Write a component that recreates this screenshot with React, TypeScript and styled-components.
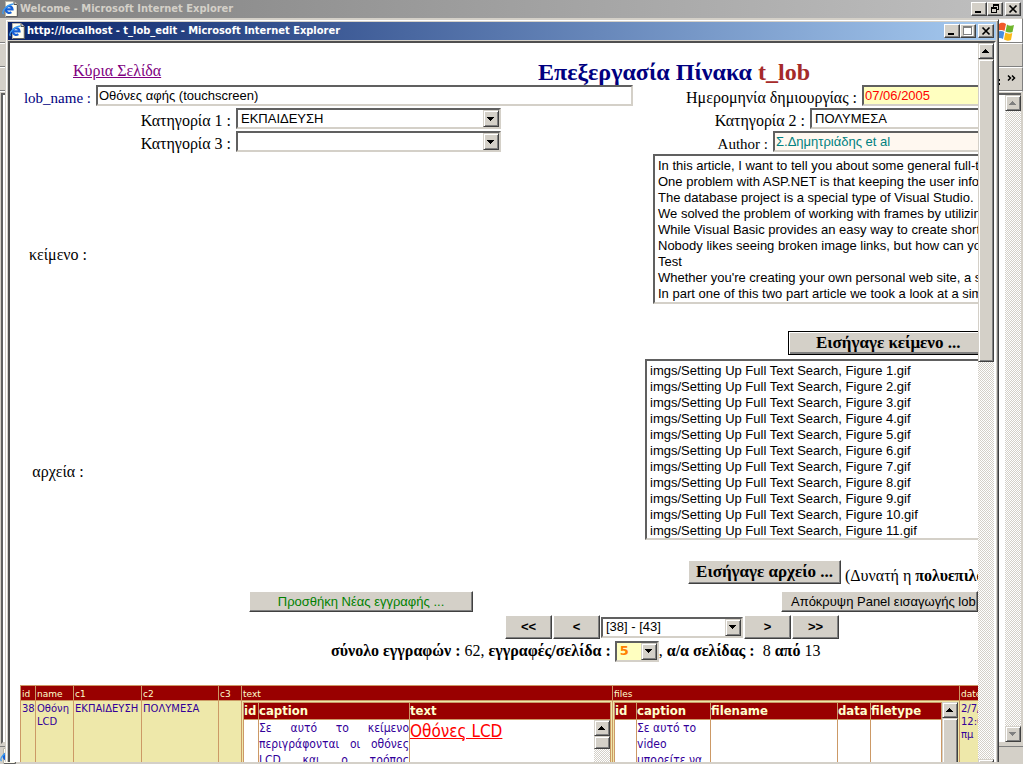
import React from "react";
import styled, { createGlobalStyle, css } from "styled-components";

const face = "#d4d0c8";
const sans = '"Liberation Sans", Arial, sans-serif';
const serif = '"Liberation Serif", "Times New Roman", serif';
const tahoma = '"DejaVu Sans Condensed", "DejaVu Sans", Tahoma, sans-serif';
const verdana = '"DejaVu Sans", Verdana, sans-serif';

const raised = css`
  border: 1px solid;
  border-color: ${face} #404040 #404040 ${face};
  box-shadow: inset 1px 1px 0 #ffffff, inset -1px -1px 0 #808080;
`;

const sunken = css`
  border: 2px solid;
  border-color: #606060 ${face} ${face} #606060;
`;

const Global = createGlobalStyle`
  *, *::before, *::after { box-sizing: border-box; }
  html, body, #root { height: 100%; }
  body { margin: 0; overflow: hidden; background: ${face}; }
`;

const Desktop = styled.div`
  position: relative;
  height: 100vh;
  overflow: hidden;
  background: ${face};
  display: flex;
  flex-direction: column;
`;

const TitleBar = styled.header<{ $active?: boolean }>`
  display: flex;
  align-items: center;
  flex: none;
  height: 18px;
  padding: 0 2px 0 ${(p) => (p.$active ? 1 : 2)}px;
  background: ${(p) =>
    p.$active
      ? "linear-gradient(90deg, #0a246a, #a6caf0)"
      : "linear-gradient(90deg, #808080, #c0c0c0)"};
  color: ${(p) => (p.$active ? "#ffffff" : face)};
  font: bold 11px/18px ${tahoma};
`;

const TitleText = styled.span`
  flex: 1;
  padding-left: 2px;
  white-space: nowrap;
`;

const Caption = styled.button<{ $gap?: boolean }>`
  width: 16px;
  height: 14px;
  padding: 0;
  margin-left: ${(p) => (p.$gap ? 2 : 0)}px;
  border: 1px solid;
  border-color: #ffffff #404040 #404040 #ffffff;
  box-shadow: inset -1px -1px 0 #808080;
  background: ${face};
  display: flex;
  align-items: center;
  justify-content: center;
`;

const ToolBand = styled.div<{ $white?: boolean }>`
  flex: none;
  height: ${(p) => (p.$white ? 26 : 24)}px;
  display: flex;
  align-items: center;
  justify-content: flex-end;
  padding-right: 4px;
  background: ${(p) =>
    p.$white ? `linear-gradient(90deg, ${face} 95%, #ffffff 95%)` : face};
  border-top: ${(p) => (p.$white ? 1 : 0)}px solid ${face};
  border-bottom: 1px solid #ffffff;
  border-right: 1px solid #808080;
  box-shadow: inset 0 -1px 0 #808080;
`;

const BackPage = styled.div`
  flex: 1;
  min-height: 0;
  margin: 1px 2px 0 1px;
  background: #ffffff;
  border: 2px solid;
  border-color: #606060 #ffffff ${face} #606060;
  border-right-width: 0;
  display: flex;
  justify-content: flex-end;
`;

const StatusBar = styled.footer`
  flex: none;
  height: 18px;
  margin-top: 2px;
  padding-top: 1px;
  border-top: 1px solid #808080;
  background: ${face};
`;

const Popup = styled.section`
  position: absolute;
  left: 5px;
  right: 24px;
  top: 19px;
  bottom: 2px;
  display: flex;
  flex-direction: column;
  overflow: hidden;
  padding: 2px 2px 0 2px;
  background: ${face};
  border: 1px solid;
  border-color: ${face} #404040 ${face} ${face};
  border-bottom: 0;
  box-shadow: inset 1px 1px 0 #ffffff, inset -1px 0 0 #808080;
`;

const PageFrame = styled.div`
  flex: 1;
  min-height: 0;
  display: flex;
  margin-top: 1px;
  border: 2px solid;
  border-color: #505050 #ffffff #505050 #505050;
  border-bottom: 0;
  background: #ffffff;
`;

const Page = styled.main`
  flex: 1;
  min-width: 0;
  overflow: hidden;
  padding-top: 17px;
  font: 16px/20px ${serif};
  color: #000000;
`;

const BarTrack = styled.div<{ $below?: boolean }>`
  flex: none;
  width: 16px;
  margin-bottom: ${(p) => (p.$below ? -13 : 0)}px;
  display: flex;
  flex-direction: column;
  background: repeating-conic-gradient(${face} 0 25%, #ffffff 0 50%) 0 0 / 2px 2px;
`;

const BarButton = styled.button`
  ${raised}
  flex: none;
  width: 16px;
  height: 16px;
  padding: 0;
  background: ${face};
  display: flex;
  align-items: center;
  justify-content: center;
`;

const Thumb = styled.div<{ $grow: number }>`
  ${raised}
  flex: ${(p) => p.$grow} 1 0;
  background: ${face};
`;

const Space = styled.div<{ $grow: number }>`
  flex: ${(p) => p.$grow} 1 0;
`;

const Arrow = ({ down, off }: { down?: boolean; off?: boolean }) => (
  <svg width="8" height="4" viewBox="0 0 8 4" shapeRendering="crispEdges">
    <path
      d={down ? "M0 0h7v1h-1v1h-1v1h-1v1h-1v-1h-1v-1h-1v-1h-1z" : "M3 0h1v1h1v1h1v1h1v1h-7v-1h1v-1h1v-1h1z"}
      fill={off ? "#808080" : "#000000"}
    />
  </svg>
);

type BarProps = { thumb: number; rest: number; off?: boolean; below?: boolean };
const ScrollBar = ({ thumb, rest, off, below }: BarProps) => (
  <BarTrack $below={below}>
    <BarButton aria-label="Scroll up">
      <Arrow off={off} />
    </BarButton>
    {thumb > 0 && <Thumb $grow={thumb} />}
    <Space $grow={rest} />
    <BarButton aria-label="Scroll down">
      <Arrow down off={off} />
    </BarButton>
  </BarTrack>
);

const IeIcon = () => (
  <svg width="16" height="16" viewBox="0 0 16 16">
    <path d="M3.500.500h8.500l3 3v12h-11.500z" fill="#fffdf0" stroke="#b8b4a8" />
    <path d="M12 .500v3h3" fill="#d4d0c8" stroke="#505050" />
    <path d="M15.500 4v11.500H4" fill="none" stroke="#606060" />
    <path d="M4 8.300h6.500a3.400 3.400 0 1 0-1.200 2.800" fill="none" stroke="#1560d8" strokeWidth="2.200" />
    <path d="M1.500 13C-1 10.500 5 3.500 11.500 3" fill="none" stroke="#3f9cf0" strokeWidth="1.300" />
  </svg>
);

const Flag = () => (
  <svg width="22" height="22" viewBox="0 0 22 22">
    <path d="M3 4c2-2 5-1.500 7 0L8.500 11C6.500 9.500 4 9.500 1.500 11z" fill="#f1592a" />
    <path d="M11 4.500c2 1.500 4.500 1.500 7 .5l-1.500 7c-2.500 1-5 .5-7-.5z" fill="#6fb52c" />
    <path d="M1.300 12c2.500-1.500 5-1.300 7 0L7 19C5 17.500 2.500 17.500 0 19z" fill="#4a8fe0" />
    <path d="M9.300 12.500c2 1.300 4.500 1.500 7 .5L15 20c-2.500 1-5 .8-7-.5z" fill="#fbb917" />
  </svg>
);

const Chevrons = () => (
  <svg width="20" height="16" viewBox="0 0 20 16">
    <path d="M0 7h2v2H0zM0 11h2v2H0z" fill="#000000" />
    <path d="M10 3.500l2.500 2.500L10 8.500M14 3.500l2.500 2.500L14 8.500" fill="none" stroke="#000000" strokeWidth="1.500" />
  </svg>
);

const MinGlyph = () => (
  <svg width="12" height="10" viewBox="0 0 12 10" shapeRendering="crispEdges">
    <path d="M2 7h6v2H2z" />
  </svg>
);
const MaxGlyph = () => (
  <svg width="12" height="10" viewBox="0 0 12 10" shapeRendering="crispEdges">
    <path d="M2 1h9v9H2z" fill="#ffffff" />
    <path d="M1 0h9v9H1zM2 2v6h7V2z" fillRule="evenodd" fill="#808080" />
  </svg>
);
const RestoreGlyph = () => (
  <svg width="12" height="10" viewBox="0 0 12 10" shapeRendering="crispEdges">
    <path d="M4 0h6v6H8V5h1V2H5v1H4zM2 3h6v6H2zM3 5v3h4V5z" fillRule="evenodd" />
  </svg>
);
const CloseGlyph = () => (
  <svg width="12" height="10" viewBox="0 0 12 10">
    <path d="M2.500 1.500l7 7M9.500 1.500l-7 7" stroke="#000000" strokeWidth="1.700" />
  </svg>
);

const FormRow = styled.div<{ $h: number }>`
  display: flex;
  justify-content: space-between;
  height: ${(p) => p.$h}px;
`;

const Heading = styled.h1`
  flex: none;
  width: 440px;
  margin: 0;
  font: bold 24px/24px ${serif};
  color: #000080;
  white-space: nowrap;

  em {
    font-style: normal;
    color: #a52a2a;
  }
`;

const HomeLink = styled.a`
  margin-left: 63px;
  line-height: 22px;
  color: #800080;
`;

const Field = styled.div`
  display: flex;
  align-items: flex-start;
  gap: 5px;
  flex: none;
`;

const Label = styled.label<{ $w?: number; $latin?: boolean; $navy?: boolean }>`
  width: ${(p) => (p.$w ? `${p.$w}px` : "auto")};
  padding-top: 3px;
  text-align: right;
  white-space: nowrap;
  font-size: ${(p) => (p.$latin ? 15 : 16)}px;
  color: ${(p) => (p.$navy ? "#000080" : "#000000")};
`;

const TextBox = styled.input<{ $w: number; $bg?: string; $ink?: string; $open?: boolean }>`
  ${sunken}
  width: ${(p) => p.$w}px;
  height: 21px;
  padding: 0 1px;
  border-radius: 0;
  background: ${(p) => p.$bg || "#ffffff"};
  color: ${(p) => p.$ink || "#000000"};
  font: 13px/16px ${sans};
  ${(p) => p.$open && "border-right: 0;"}
`;

const Combo = styled.span<{ $w: number; $open?: boolean; $bg?: string }>`
  ${sunken}
  flex: none;
  display: inline-flex;
  width: ${(p) => p.$w}px;
  height: 21px;
  background: ${(p) => p.$bg || "#ffffff"};
  ${(p) => p.$open && "border-right: 0;"}
`;

const ComboSelect = styled.select<{ $bold?: boolean }>`
  appearance: none;
  flex: 1;
  min-width: 0;
  padding: 0 3px;
  border: 0;
  background: transparent;
  color: ${(p) => (p.$bold ? "#ff8000" : "#000000")};
  font: ${(p) => (p.$bold ? `bold 13px/16px ${verdana}` : `13px/16px ${sans}`)};
`;

const ComboArrow = styled.span`
  ${raised}
  flex: none;
  width: 16px;
  background: ${face};
  display: flex;
  align-items: center;
  justify-content: center;
`;

type DropProps = { id: string; w: number; value: string; open?: boolean; bold?: boolean; bg?: string };
const Drop = ({ id, w, value, open, bold, bg }: DropProps) => (
  <Combo $w={w} $open={open} $bg={bg}>
    <ComboSelect id={id} $bold={bold} defaultValue={value} aria-label={id}>
      <option>{value}</option>
    </ComboSelect>
    {!open && (
      <ComboArrow>
        <Arrow down />
      </ComboArrow>
    )}
  </Combo>
);

const BlockRow = styled.div<{ $gap: number }>`
  display: flex;
  align-items: center;
  justify-content: space-between;
  margin-top: ${(p) => p.$gap}px;
`;

const BlockLabel = styled.label`
  width: 96px;
  text-align: center;
`;

const Stack = styled.div<{ $gap: number }>`
  display: flex;
  flex-direction: column;
  align-items: flex-end;
  gap: ${(p) => p.$gap}px;
`;

const ListBox = styled.select<{ $w: number; $h: number }>`
  ${sunken}
  appearance: none;
  width: ${(p) => p.$w}px;
  height: ${(p) => p.$h}px;
  padding: 2px 0 0;
  border-right: 0;
  border-radius: 0;
  background: #ffffff;
  color: #000000;
  font: 13px/16px ${sans};
  overflow: hidden;

  option {
    height: 16px;
    min-height: 16px;
    padding: 0 0 0 3px;
    line-height: 16px;
    white-space: nowrap;
  }
`;

type PushProps = { $w: number; $h?: number; $kind?: "serif" | "sans" | "nav"; $ink?: string; $focus?: boolean; $left?: number };
const Push = styled.button<PushProps>`
  border: 1px solid;
  border-color: #ffffff #404040 #404040 #ffffff;
  box-shadow: inset -1px -1px 0 #808080;
  flex: none;
  width: ${(p) => p.$w}px;
  height: ${(p) => p.$h || 24}px;
  padding: 0 0 0 ${(p) => p.$left || 0}px;
  background: ${face};
  color: ${(p) => p.$ink || "#000000"};
  white-space: nowrap;
  text-align: ${(p) => (p.$left ? "left" : "center")};
  font: ${(p) =>
    p.$kind === "sans"
      ? `13px/16px ${sans}`
      : p.$kind === "nav"
      ? `bold 13px/16px ${sans}`
      : `bold 17px/16px ${serif}`};
  ${(p) =>
    p.$focus &&
    "border-color: #000000; border-right: 0; box-shadow: inset 1px 1px 0 #ffffff, inset 0 -2px 0 #808080;"}
`;

const FileLine = styled.div`
  display: flex;
  align-items: flex-start;
  gap: 4px;
  width: 290px;
  height: 24px;
  white-space: nowrap;
`;

const Note = styled.span`
  padding-top: 6px;
`;

const Actions = styled.div`
  display: flex;
  justify-content: space-between;
  margin-top: 7px;
  padding-left: 239px;
`;

const Pager = styled.nav`
  display: flex;
  align-items: center;
  gap: 1px;
  margin-top: 3px;
  padding-left: 495px;
`;

const Summary = styled.div`
  display: flex;
  align-items: center;
  margin-top: 1px;
  padding-left: 321px;
  line-height: 22px;
  white-space: pre;
`;

const line = "1px solid #cc9966";

const Records = styled.table`
  width: 999px;
  margin: 23px 0 0 10px;
  table-layout: fixed;
  border-collapse: separate;
  border-spacing: 0;
`;

const HeadCell = styled.th`
  height: 15px;
  padding: 1px 0 0 1px;
  border-left: ${line};
  border-top: ${line};
  background: #990000;
  color: #ffffcc;
  font: 9px/12px ${verdana};
  text-align: left;
`;

const DataCell = styled.td`
  height: 200px;
  padding: 1px;
  border-left: ${line};
  border-top: ${line};
  background: #eee8aa;
  color: #330099;
  font: 10px/13px ${verdana};
  vertical-align: top;
`;

const Inner = styled.table`
  width: 100%;
  height: 200px;
  table-layout: fixed;
  border-collapse: separate;
  border-spacing: 0;
  border-right: ${line};
  background: #ffffff;
`;

const InnerHead = styled.th`
  height: 17px;
  padding: 0;
  border-left: ${line};
  border-top: ${line};
  background: #990000;
  color: #ffffcc;
  font: bold 13px/16px ${tahoma};
  text-align: left;
`;

const InnerCell = styled.td<{ $justify?: boolean }>`
  padding: 0;
  border-left: ${line};
  border-top: ${line};
  color: #330099;
  font: 12px/16px ${tahoma};
  text-align: ${(p) => (p.$justify ? "justify" : "left")};
  vertical-align: top;
`;

const Scroller = styled.div`
  display: flex;
  justify-content: space-between;
  height: 182px;
`;

const RedTitle = styled.u`
  color: #ff0000;
  font: 17px/22px ${tahoma};
  text-decoration-thickness: 1px;
`;

const WithBar = styled.div`
  display: flex;
  height: 200px;
`;

const articles = [
  "In this article, I want to tell you about some general full-text search",
  "One problem with ASP.NET is that keeping the user informed",
  "The database project is a special type of Visual Studio.",
  "We solved the problem of working with frames by utilizing",
  "While Visual Basic provides an easy way to create shortcuts",
  "Nobody likes seeing broken image links, but how can you",
  "Test",
  "Whether you're creating your own personal web site, a small",
  "In part one of this two part article we took a look at a simple",
];
const figures = Array.from({ length: 11 }, (_, i) => `imgs/Setting Up Full Text Search, Figure ${i + 1}.gif`);
const columns = [15, 38, 68, 77, 23, 371, 347, 60];
const headings = ["id", "name", "c1", "c2", "c3", "text", "files", "date"];

const Cols = ({ widths }: { widths: number[] }) => (
  <colgroup>
    {widths.map((w, i) => (
      <col key={i} width={w} />
    ))}
  </colgroup>
);

export default function App() {
  return (
    <Desktop>
      <Global />
      <TitleBar>
        <IeIcon />
        <TitleText>Welcome - Microsoft Internet Explorer</TitleText>
        <Caption aria-label="Minimize"><MinGlyph /></Caption>
        <Caption aria-label="Restore"><RestoreGlyph /></Caption>
        <Caption aria-label="Close" $gap><CloseGlyph /></Caption>
      </TitleBar>
      <ToolBand $white><Flag /></ToolBand>
      <ToolBand />
      <ToolBand><Chevrons /></ToolBand>
      <BackPage>
        <ScrollBar thumb={0} rest={1} off />
      </BackPage>
      <StatusBar><IeIcon /></StatusBar>

      <Popup>
        <TitleBar $active>
          <IeIcon />
          <TitleText>http://localhost - t_lob_edit - Microsoft Internet Explorer</TitleText>
          <Caption aria-label="Minimize"><MinGlyph /></Caption>
          <Caption aria-label="Maximize"><MaxGlyph /></Caption>
          <Caption aria-label="Close" $gap><CloseGlyph /></Caption>
        </TitleBar>
        <PageFrame>
          <Page>
            <FormRow $h={25}>
              <HomeLink href="#">Κύρια Σελίδα</HomeLink>
              <Heading>
                Επεξεργασία Πίνακα <em>t_lob</em>
              </Heading>
            </FormRow>
            <FormRow $h={23}>
              <Field>
                <Label $w={81} $latin $navy htmlFor="lob">lob_name :</Label>
                <TextBox id="lob" $w={537} defaultValue="Οθόνες αφής (touchscreen)" />
              </Field>
              <Field>
                <Label htmlFor="created">Ημερομηνία δημιουργίας :</Label>
                <TextBox id="created" $w={116} $open $bg="#ffffc0" $ink="#ff0000" defaultValue="07/06/2005" />
              </Field>
            </FormRow>
            <FormRow $h={23}>
              <Field>
                <Label $w={221} htmlFor="category1">Κατηγορία 1 :</Label>
                <Drop id="category1" w={265} value="ΕΚΠΑΙΔΕΥΣΗ" />
              </Field>
              <Field>
                <Label htmlFor="category2">Κατηγορία 2 :</Label>
                <Drop id="category2" w={168} value="ΠΟΛΥΜΕΣΑ" open />
              </Field>
            </FormRow>
            <FormRow $h={23}>
              <Field>
                <Label $w={221} htmlFor="category3">Κατηγορία 3 :</Label>
                <Drop id="category3" w={265} value="" />
              </Field>
              <Field>
                <Label $latin htmlFor="author">Author :</Label>
                <TextBox id="author" $w={205} $open $bg="#fff8f0" $ink="#008080" defaultValue="Σ.Δημητριάδης et al" />
              </Field>
            </FormRow>
            <BlockRow $gap={0}>
              <BlockLabel htmlFor="articles">κείμενο :</BlockLabel>
              <Stack $gap={27}>
                <ListBox id="articles" size={9} multiple $w={325} $h={150}>
                  {articles.map((t) => (
                    <option key={t}>{t}</option>
                  ))}
                </ListBox>
                <Push $w={190} $focus $left={27}>Εισήγαγε κείμενο ...</Push>
              </Stack>
            </BlockRow>
            <BlockRow $gap={4}>
              <BlockLabel htmlFor="figures">αρχεία :</BlockLabel>
              <Stack $gap={20}>
                <ListBox id="figures" size={11} multiple $w={333} $h={181}>
                  {figures.map((t) => (
                    <option key={t}>{t}</option>
                  ))}
                </ListBox>
                <FileLine>
                  <Push $w={153}>Εισήγαγε αρχείο ...</Push>
                  <Note>
                    (Δυνατή η <b>πολυεπιλογή</b>)
                  </Note>
                </FileLine>
              </Stack>
            </BlockRow>
            <Actions>
              <Push $w={224} $h={21} $kind="sans" $ink="#008000">Προσθήκη Νέας εγγραφής ...</Push>
              <Push $w={197} $h={21} $kind="sans" $left={9}>Απόκρυψη Panel εισαγωγής lob</Push>
            </Actions>
            <Pager>
              <Push $w={47} $kind="nav">&lt;&lt;</Push>
              <Push $w={47} $kind="nav">&lt;</Push>
              <Drop id="records" w={142} value="[38] - [43]" />
              <Push $w={47} $kind="nav">&gt;</Push>
              <Push $w={47} $kind="nav">&gt;&gt;</Push>
            </Pager>
            <Summary>
              <b>σύνολο εγγραφών : </b>62, <b>εγγραφές/σελίδα : </b>
              <Drop id="pageSize" w={44} value="5" bold bg="#ffffc0" />
              , <b>α/α σελίδας : </b> 8 <b>από</b> 13
            </Summary>
            <Records>
              <Cols widths={columns} />
              <thead>
                <tr>
                  {headings.map((h) => (
                    <HeadCell key={h}>{h}</HeadCell>
                  ))}
                </tr>
              </thead>
              <tbody>
                <tr>
                  <DataCell>38</DataCell>
                  <DataCell>Οθόνη LCD</DataCell>
                  <DataCell>ΕΚΠΑΙΔΕΥΣΗ</DataCell>
                  <DataCell>ΠΟΛΥΜΕΣΑ</DataCell>
                  <DataCell />
                  <DataCell>
                    <Inner>
                      <Cols widths={[15, 151, 201]} />
                      <thead>
                        <tr>
                          <InnerHead>id</InnerHead>
                          <InnerHead>caption</InnerHead>
                          <InnerHead>text</InnerHead>
                        </tr>
                      </thead>
                      <tbody>
                        <tr>
                          <InnerCell />
                          <InnerCell $justify>
                            Σε αυτό το κείμενο περιγράφονται οι οθόνες LCD και ο τρόπος λειτουργίας τους
                          </InnerCell>
                          <InnerCell>
                            <Scroller>
                              <RedTitle>Οθόνες LCD</RedTitle>
                              <ScrollBar thumb={11} rest={139} />
                            </Scroller>
                          </InnerCell>
                        </tr>
                      </tbody>
                    </Inner>
                  </DataCell>
                  <DataCell>
                    <WithBar>
                      <Inner>
                        <Cols widths={[22, 74, 127, 33, 71]} />
                        <thead>
                          <tr>
                            <InnerHead>id</InnerHead>
                            <InnerHead>caption</InnerHead>
                            <InnerHead>filename</InnerHead>
                            <InnerHead>data</InnerHead>
                            <InnerHead>filetype</InnerHead>
                          </tr>
                        </thead>
                        <tbody>
                          <tr>
                            <InnerCell />
                            <InnerCell>Σε αυτό το video μπορείτε να δείτε</InnerCell>
                            <InnerCell />
                            <InnerCell />
                            <InnerCell />
                          </tr>
                        </tbody>
                      </Inner>
                      <ScrollBar thumb={2} rest={1} />
                    </WithBar>
                  </DataCell>
                  <DataCell>2/7/2005 12:00:00 πμ</DataCell>
                </tr>
              </tbody>
            </Records>
          </Page>
          <ScrollBar thumb={302} rest={398} below />
        </PageFrame>
      </Popup>
    </Desktop>
  );
}
